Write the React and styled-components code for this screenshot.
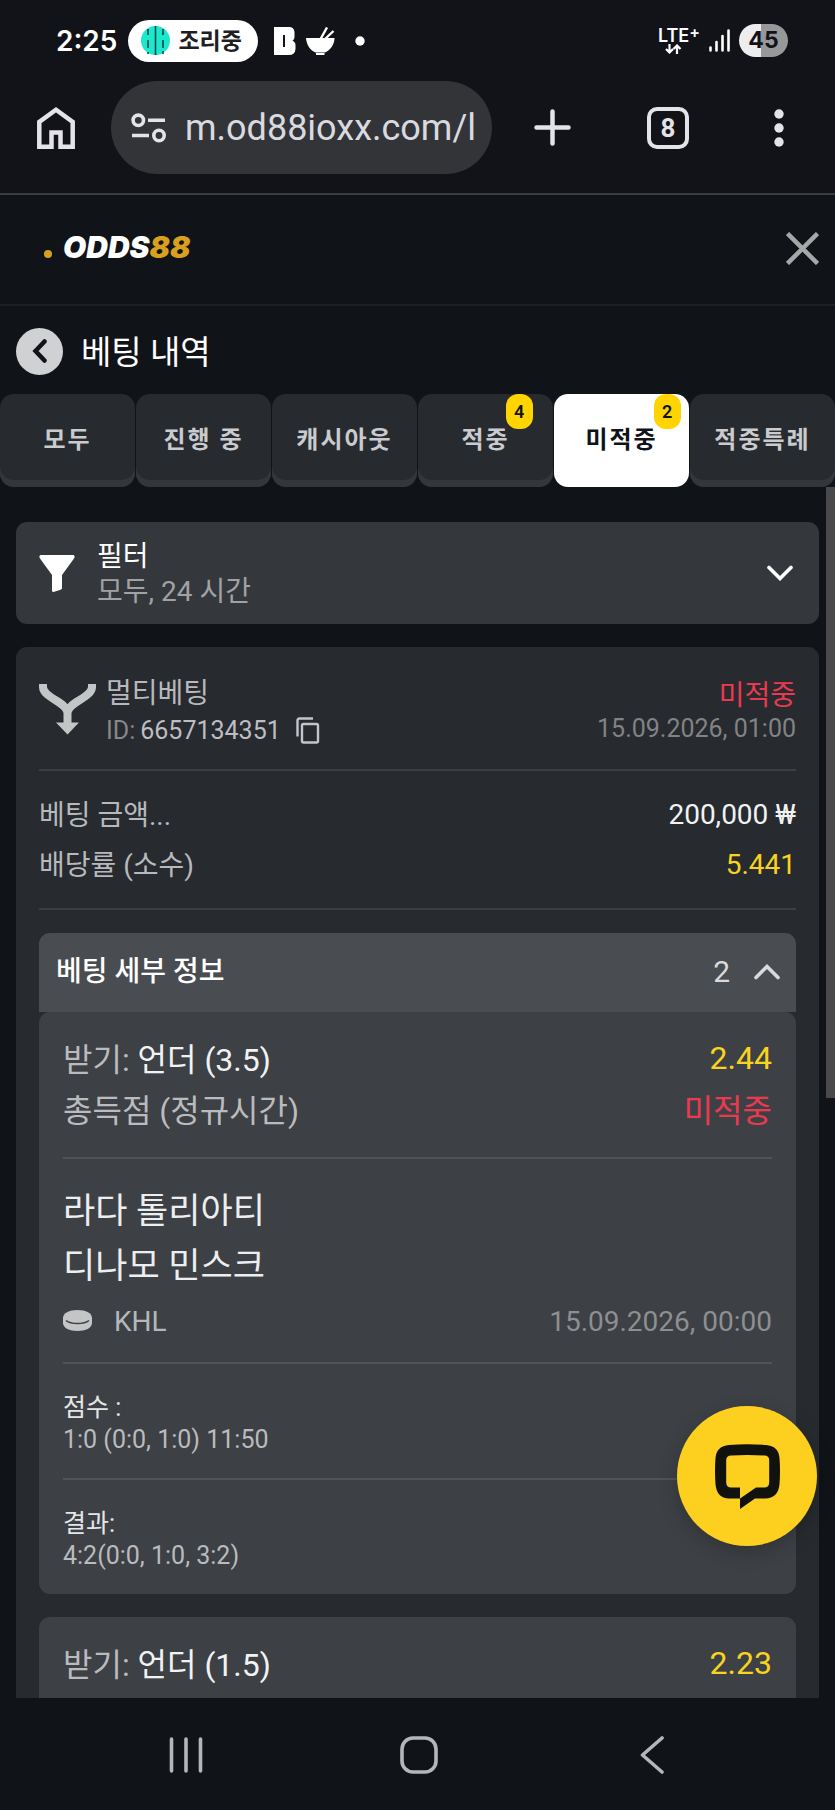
import React from "react";
import styled, { createGlobalStyle, css } from "styled-components";

const GlobalStyle = createGlobalStyle`
  *, *::before, *::after { box-sizing: border-box; }
  body {
    margin: 0;
    background: #101317;
    color: #e8eaed;
    font-family: Roboto, "Noto Sans CJK KR", sans-serif;
    font-size: 28px;
  }
  button {
    display: flex;
    align-items: center;
    justify-content: center;
    margin: 0;
    padding: 0;
    border: 0;
    background: none;
    color: inherit;
    font: inherit;
    cursor: pointer;
  }
  svg { display: block; flex: none; }
  h1, h2, p, dl, dt, dd { margin: 0; font: inherit; }
`;

const Phone = styled.div`
  position: relative;
  display: flex;
  flex-direction: column;
  height: 100vh;
  overflow: hidden;
`;

/* ---------- system status bar ---------- */

const StatusBar = styled.div`
  display: flex;
  align-items: center;
  height: 81px;
  padding: 0 47px 0 56px;
  background: #121318;
  color: #fff;
  font-family: Inter, "Noto Sans CJK KR", sans-serif;
`;

const Clock = styled.time`
  margin-right: 11px;
  font-size: 28px;
  font-weight: 600;
`;

const LivePill = styled.div`
  display: flex;
  align-items: center;
  gap: 8px;
  height: 42px;
  margin-right: 16px;
  padding: 0 16px 0 13px;
  border-radius: 21px;
  background: #fff;
  color: #1f2023;
  font-size: 23px;
  font-weight: 600;
  line-height: 24px;
`;

const StatusIcons = styled.div`
  display: flex;
  align-items: center;
  gap: 10px;
`;

const StatusEnd = styled(StatusIcons)`
  gap: 9px;
  margin-left: auto;
`;

const Network = styled.div`
  display: flex;
  flex-direction: column;
  font-size: 18px;
  font-weight: 600;
  line-height: 16px;

  sup {
    font-size: 16px;
    line-height: 0;
    vertical-align: 4px;
  }
  svg { margin-left: 7px; }
`;

const Battery = styled.div`
  width: 49px;
  height: 33px;
  border-radius: 17px;
  background: linear-gradient(90deg, #ededf0 45%, #98989a 45%);
  color: #121318;
  font-size: 23px;
  font-weight: 700;
  line-height: 33px;
  text-align: center;
`;

/* ---------- browser toolbar ---------- */

const BrowserBar = styled.div`
  display: flex;
  align-items: center;
  padding: 0 0 19px 37px;
  border-bottom: 2px solid #3c3d43;
  background: #121318;
  color: #e3e3e8;
`;

const AddressPill = styled.div`
  display: flex;
  align-items: center;
  flex: 1;
  gap: 18px;
  min-width: 0;
  height: 93px;
  margin: 0 42px 0 36px;
  padding: 0 14px 0 20px;
  border-radius: 47px;
  background: #333438;
`;

const Address = styled.input`
  flex: 1;
  min-width: 0;
  padding: 0;
  border: 0;
  outline: 0;
  background: none;
  color: #d9dae0;
  font: 36px/48px Roboto, sans-serif;
`;

const BrowserActions = styled.div`
  display: flex;
  align-items: center;
`;

const TabCount = styled.button`
  && {
    width: 42px;
    height: 42px;
    margin: 0 85px 0 76px;
    border: 4px solid #e3e3e8;
    border-radius: 10px;
    font: 700 26px/34px Roboto, sans-serif;
  }
`;

const MenuButton = styled.button`
  && {
    margin-right: 51px;
  }
`;

/* ---------- site header ---------- */

const SiteHeader = styled.header`
  display: flex;
  align-items: center;
  justify-content: space-between;
  height: 111px;
  padding: 0 16px 2px 44px;
  border-bottom: 2px solid #1c1f23;
`;

const Logo = styled.a`
  display: flex;
  align-items: baseline;
  gap: 11px;
  padding-bottom: 4px;
  color: #fff;
  font: italic 900 30px/32px Inter, sans-serif;
  text-decoration: none;

  em { color: #d8a01c; }
`;

const LogoDot = styled.span`
  width: 8px;
  height: 8px;
  border-radius: 50%;
  background: #d8a01c;
`;

const TitleRow = styled.div`
  display: flex;
  align-items: center;
  gap: 18px;
  height: 88px;
  padding: 2px 16px 0;
  color: #fff;
`;

const BackButton = styled.button`
  && {
    width: 47px;
    height: 47px;
    border-radius: 50%;
    background: #cfd1d3;
    color: #101317;
  }
`;

const Title = styled.h1`
  && {
    padding-top: 3px;
    font-size: 33px;
    line-height: 48px;
  }
`;

/* ---------- result tabs ---------- */

const Tabs = styled.div`
  display: flex;
  gap: 1px;
  height: 93px;
`;

const Tab = styled.button`
  && {
    flex: 1 0 auto;
    align-items: stretch;
    min-width: 135px;
    padding: 0 24px;
    border-radius: 14px;
    background: #272a2e;
    box-shadow: inset 0 -7px 0 #33373b;
    color: #c9cbce;
    font-size: 24px;
    font-weight: 600;
    letter-spacing: 2px;
    line-height: 32px;
    ${(p) =>
      p.$active &&
      css`
        background: #fff;
        box-shadow: none;
        color: #101317;
      `}
  }
`;

const TabLabel = styled.span`
  position: relative;
  display: flex;
  align-items: center;
  padding-bottom: 2px;
`;

const Badge = styled.span`
  position: absolute;
  top: 0;
  left: 100%;
  width: 27px;
  height: 35px;
  margin-left: -4px;
  border-radius: 12px;
  background: #ffd400;
  color: #101317;
  font-size: 18px;
  line-height: 35px;
  letter-spacing: 0;
  text-align: center;
`;

/* ---------- scrolling content ---------- */

const ContentFrame = styled.div`
  position: relative;
  flex: 1;
  min-height: 0;
`;

const Content = styled.main`
  display: flex;
  flex-direction: column;
  gap: 23px;
  height: 100%;
  padding: 35px 16px 0;
  overflow-y: auto;
  scrollbar-width: none;

  > * { flex: none; }
`;

const ScrollThumb = styled.div`
  position: absolute;
  top: 0;
  right: 0;
  width: 9px;
  height: 611px;
  background: #49494c;
`;

const FilterButton = styled.button`
  && {
    gap: 22px;
    height: 102px;
    padding: 0 26px 0 23px;
    border-radius: 11px;
    background: #34373b;
    color: #fff;
    line-height: 35px;
    text-align: left;
  }
`;

const FilterText = styled.span`
  flex: 1;
  display: flex;
  flex-direction: column;
  padding-top: 2px;
`;

const Muted = styled.span`
  color: #a0a2a5;
`;

const BetCard = styled.article`
  padding: 23px;
  border-radius: 11px;
  background: #272a2e;
`;

const BetHead = styled.header`
  display: flex;
  align-items: flex-start;
  gap: 10px;
  padding-bottom: 20px;
  border-bottom: 2px solid #3b3e42;

  > svg { margin-top: 13px; }
`;

const BetName = styled.div`
  flex: 1;
  display: flex;
  flex-direction: column;
  height: 79px;
  padding-top: 5px;
  color: #b7b9bc;
  line-height: 37px;
`;

const BetId = styled.div`
  display: flex;
  align-items: center;
  gap: 5px;
  color: #85878a;
  font-size: 25px;

  b { color: #bcbec1; font-weight: 400; }
  button { margin-left: 10px; color: #c3c5c8; }
`;

const BetStatus = styled.div`
  display: flex;
  flex-direction: column;
  align-items: flex-end;
  padding-top: 9px;
  line-height: 33px;

  time { color: #818386; font-size: 25px; }
`;

const Lost = styled.span`
  color: #ea3a50;
`;

const Odds = styled.dd`
  color: #f8d31f;
`;

const Totals = styled.dl`
  padding: 20px 0 17px;
  border-bottom: 2px solid #3b3e42;
`;

const TotalRow = styled.div`
  display: flex;
  justify-content: space-between;
  color: #b7b9bc;
  line-height: 50px;

  dd { line-height: 48px; }
`;

const Amount = styled.dd`
  color: #f1f2f3;
`;

const Details = styled.section`
  display: flex;
  flex-direction: column;
  margin-top: 23px;
`;

const DetailsToggle = styled.button`
  && {
    justify-content: flex-start;
    gap: 24px;
    height: 79px;
    padding: 0 16px 2px 17px;
    border-radius: 11px 11px 0 0;
    background: #494c50;
    color: #d8dadd;
    font-size: 30px;
    line-height: 40px;
  }

  strong {
    flex: 1;
    color: #fff;
    font-size: 28px;
    font-weight: 500;
    text-align: left;
  }
`;

const Leg = styled.section`
  padding: 23px 24px 0;
  border-radius: 11px;
  background: #3d4044;

  & + & { margin-top: 23px; }
`;

const Pick = styled.dl`
  padding-bottom: 20px;
`;

const PickRow = styled.div`
  display: flex;
  justify-content: space-between;
  color: #b9bbbe;
  font-size: 32px;
  line-height: 51px;

  b { color: #f1f2f3; font-weight: 400; }
  ${Odds} { line-height: 47px; }
`;

const Match = styled.div`
  padding: 25px 0 20px;
  border-top: 2px solid #505357;
`;

const Team = styled.h2`
  && {
    color: #eceef0;
    font-size: 35px;
    line-height: 55px;
  }
`;

const League = styled.div`
  display: flex;
  align-items: center;
  gap: 22px;
  margin-top: 8px;
  color: #b5b7ba;
  line-height: 40px;

  time { margin-left: auto; color: #8d8f93; }
`;

const Score = styled.div`
  padding: 28px 0 22px;
  border-top: 2px solid #505357;
  color: #b9bbbe;
  font-size: 25px;
  line-height: 32px;

  h3 { margin: 0; color: #e4e6e8; font: inherit; }
`;

const ChatButton = styled.button`
  && {
    position: absolute;
    right: 18px;
    bottom: 152px;
    width: 140px;
    height: 140px;
    border-radius: 50%;
    background: #fdd020;
    box-shadow: 0 6px 20px rgba(0, 0, 0, 0.2);
    color: #11110d;
  }
`;

/* ---------- system navigation ---------- */

const NavBar = styled.nav`
  display: grid;
  grid-template-columns: repeat(3, 1fr);
  height: 112px;
  padding: 2px 66px 0 69px;
  background: #101317;
  color: #b4b6b9;
`;

/* ---------- drawings ---------- */

const AppMark = () => (
  <svg width="29" height="29" viewBox="0 0 29 29">
    <circle cx="14.500" cy="14.500" r="14.500" fill="#1ce8cf" />
    <path d="M14.500 0V29M7 3V9M7 14V22M22 3V9M22 14V22M7 26V28M22 25V28" stroke="#11423f" strokeWidth="1.600" />
  </svg>
);

const LetterMark = () => (
  <svg width="22" height="28" viewBox="0 0 22 28" fill="currentColor" fillRule="evenodd">
    <path d="M0 0H15Q20 0 20.500 5V10Q20.500 13 18.500 13.700Q21.500 15 21.500 18V22Q21 28 15 28H0ZM9 8V20H11V8Z" />
  </svg>
);

const BowlIcon = () => (
  <svg width="29" height="28" viewBox="0 0 29 28">
    <path d="M0 11H28.500C28.500 18 24 23 19 25.500H9.500C4 23 .5 18 0 11Z" fill="currentColor" />
    <path d="M10 27H18.500" stroke="currentColor" strokeWidth="2" />
    <path d="M14 13L21 .5M18 13L27.500 4" stroke="currentColor" strokeWidth="2.400" />
  </svg>
);

const DataArrows = () => (
  <svg width="17" height="10" viewBox="0 0 17 10" fill="none" stroke="currentColor" strokeWidth="2.200">
    <path d="M4.500 0V8M1 5L4.500 8.500L8 5M12 10V2M8.500 5L12 1.500L15.500 5" />
  </svg>
);

const SignalIcon = () => (
  <svg width="21" height="23" viewBox="0 0 21 23" stroke="currentColor" strokeWidth="2.600" strokeLinecap="round">
    <path d="M1.500 18.500V21.500M7.500 13V21.500M13.500 7V21.500M19.500 1.500V21.500" />
  </svg>
);

const HomeIcon = () => (
  <svg width="38" height="42" viewBox="0 0 38 42" fill="none" stroke="currentColor" strokeWidth="4.500">
    <path d="M2.300 39.700V15L19 2.800L35.700 15V39.700H23.500V25.500H14.500V39.700Z" />
  </svg>
);

const TuneIcon = () => (
  <svg width="36" height="30" viewBox="0 0 36 30" fill="none" stroke="currentColor" strokeWidth="3.600">
    <circle cx="7.300" cy="7.300" r="5.200" />
    <path d="M17 7.300H34M1 22.500H18" />
    <circle cx="28" cy="22.500" r="5.200" />
  </svg>
);

const PlusIcon = () => (
  <svg width="37" height="37" viewBox="0 0 37 37" stroke="currentColor" strokeWidth="4.500" strokeLinecap="round">
    <path d="M18.500 2.500V34.500M2.500 18.500H34.500" />
  </svg>
);

const DotsIcon = () => (
  <svg width="10" height="38" viewBox="0 0 10 38" fill="currentColor">
    <circle cx="5" cy="5" r="4.700" />
    <circle cx="5" cy="19" r="4.700" />
    <circle cx="5" cy="33" r="4.700" />
  </svg>
);

const CloseIcon = () => (
  <svg width="33" height="33" viewBox="0 0 33 33" stroke="#a5a7a9" strokeWidth="4.500">
    <path d="M1.500 1.500L31.500 31.500M31.500 1.500L1.500 31.500" />
  </svg>
);

const BackIcon = () => (
  <svg width="16" height="24" viewBox="0 0 16 24" fill="none" stroke="currentColor" strokeWidth="4.500" strokeLinecap="round">
    <path d="M12.500 2.500L3.500 12L12.500 21.500" />
  </svg>
);

const FunnelIcon = () => (
  <svg width="36" height="37" viewBox="0 0 36 37" fill="currentColor">
    <path d="M1.500 0H34.500Q36.500 1 35 3.500L23 20V33.500Q22.500 34.500 21.500 34.800L14.500 37Q13 37 13 35.500V20L1 3.500Q-.5 1 1.500 0Z" />
  </svg>
);

const Chevron = ({ up }) => (
  <svg width="26" height="16" viewBox="0 0 26 16" fill="none" stroke="currentColor" strokeWidth="3.600" strokeLinecap="round">
    <path d={up ? "M2 13.500L13 2.500L24 13.500" : "M2 2.500L13 13.500L24 2.500"} />
  </svg>
);

const MergeIcon = () => (
  <svg width="57" height="52" viewBox="0 0 57 52" fill="none" stroke="#c3c5c7" strokeWidth="8">
    <path d="M4 1V4C4 15 28.500 19 28.500 30M53 1V4C53 15 28.500 19 28.500 30V42" />
    <path d="M17 39.500H40L28.500 51.500Z" fill="#c3c5c7" stroke="none" />
  </svg>
);

const CopyIcon = () => (
  <svg width="24" height="28" viewBox="0 0 24 28" fill="none" stroke="currentColor" strokeWidth="2.400">
    <path d="M1.500 19.500V3.500Q1.500 1.500 3.500 1.500H17" />
    <rect x="6" y="7" width="16" height="18.500" rx="1.500" />
  </svg>
);

const PuckIcon = () => (
  <svg width="29" height="24" viewBox="0 0 29 24">
    <path d="M0 8C0 3 6 0 14.500 0S29 3 29 8V13C29 18 22.500 21 14.500 21S0 18 0 13Z" fill="#c4c5c7" />
    <path d="M3 10.500C8 14.500 21 14.500 26 10.500" fill="none" stroke="#3d4044" strokeWidth="1.600" />
  </svg>
);

const ChatIcon = () => (
  <svg width="65" height="65" viewBox="0 0 65 65" fill="currentColor" fillRule="evenodd">
    <path d="M14 1Q32 -.7 51 1Q63.500 2 64.500 14Q65.500 27 64.500 40Q63.500 54 50 54.500H40L25 65V54.500H14Q1.500 54 .5 40Q-.5 27 .5 14Q1.500 2 14 1ZM16 11.500Q11.500 11.500 11.200 16V38.500Q11.500 43.500 16 43.500H25V54.500L41 43.500H49.500Q54 43.500 54.200 38.500V16Q54 11.500 49.500 11.500Q32 10.500 16 11.500Z" />
  </svg>
);

const RecentsIcon = () => (
  <svg width="34" height="36" viewBox="0 0 34 36" stroke="currentColor" strokeWidth="3.600" strokeLinecap="round">
    <path d="M2.500 2V34M17 2V34M31.500 2V34" />
  </svg>
);

const NavHomeIcon = () => (
  <svg width="38" height="38" viewBox="0 0 38 38" fill="none" stroke="currentColor" strokeWidth="3.600">
    <rect x="2" y="2" width="34" height="34" rx="11" />
  </svg>
);

const NavBackIcon = () => (
  <svg width="24" height="38" viewBox="0 0 24 38" fill="none" stroke="currentColor" strokeWidth="3.600" strokeLinecap="round" strokeLinejoin="round">
    <path d="M22 2L2.500 19L22 36" />
  </svg>
);

/* ---------- data ---------- */

const TABS = [
  { label: "모두" },
  { label: "진행 중" },
  { label: "캐시아웃" },
  { label: "적중", count: 4 },
  { label: "미적중", count: 2, active: true },
  { label: "적중특례" },
];

const SCORES = [
  { title: "점수 :", value: "1:0 (0:0, 1:0) 11:50" },
  { title: "결과:", value: "4:2(0:0, 1:0, 3:2)" },
];

export default function App() {
  return (
    <>
      <GlobalStyle />
      <Phone>
        <StatusBar>
          <Clock>2:25</Clock>
          <LivePill>
            <AppMark />
            조리중
          </LivePill>
          <StatusIcons>
            <LetterMark />
            <BowlIcon />
            <svg width="30" height="10" viewBox="0 0 30 10"><circle cx="15" cy="5" r="4.700" fill="#fff" /></svg>
          </StatusIcons>
          <StatusEnd>
            <Network>
              <span>LTE<sup>+</sup></span>
              <DataArrows />
            </Network>
            <SignalIcon />
            <Battery>45</Battery>
          </StatusEnd>
        </StatusBar>

        <BrowserBar>
          <button aria-label="홈"><HomeIcon /></button>
          <AddressPill>
            <TuneIcon />
            <Address aria-label="주소" defaultValue="m.od88ioxx.com/l" />
          </AddressPill>
          <BrowserActions>
            <button aria-label="새 탭"><PlusIcon /></button>
            <TabCount>8</TabCount>
            <MenuButton aria-label="메뉴"><DotsIcon /></MenuButton>
          </BrowserActions>
        </BrowserBar>

        <SiteHeader>
          <Logo href="#">
            <LogoDot />
            <span>ODDS<em>88</em></span>
          </Logo>
          <button aria-label="닫기"><CloseIcon /></button>
        </SiteHeader>

        <TitleRow>
          <BackButton aria-label="뒤로"><BackIcon /></BackButton>
          <Title>베팅 내역</Title>
        </TitleRow>

        <Tabs role="tablist">
          {TABS.map((t) => (
            <Tab key={t.label} role="tab" aria-selected={!!t.active} $active={t.active}>
              <TabLabel>
                {t.label}
                {t.count && <Badge>{t.count}</Badge>}
              </TabLabel>
            </Tab>
          ))}
        </Tabs>

        <ContentFrame>
          <Content>
            <FilterButton>
              <FunnelIcon />
              <FilterText>
                <span>필터</span>
                <Muted>모두, 24 시간</Muted>
              </FilterText>
              <Chevron />
            </FilterButton>

            <BetCard>
              <BetHead>
                <MergeIcon />
                <BetName>
                  <span>멀티베팅</span>
                  <BetId>
                    ID: <b>6657134351</b>
                    <button aria-label="복사"><CopyIcon /></button>
                  </BetId>
                </BetName>
                <BetStatus>
                  <Lost>미적중</Lost>
                  <time>15.09.2026, 01:00</time>
                </BetStatus>
              </BetHead>

              <Totals>
                <TotalRow>
                  <dt>베팅 금액...</dt>
                  <Amount>200,000 ₩</Amount>
                </TotalRow>
                <TotalRow>
                  <dt>배당률 (소수)</dt>
                  <Odds>5.441</Odds>
                </TotalRow>
              </Totals>

              <Details>
                <DetailsToggle aria-expanded="true">
                  <strong>베팅 세부 정보</strong>
                  <span>2</span>
                  <Chevron up />
                </DetailsToggle>

                <Leg>
                  <Pick>
                    <PickRow>
                      <dt>받기: <b>언더 (3.5)</b></dt>
                      <Odds>2.44</Odds>
                    </PickRow>
                    <PickRow>
                      <dt>총득점 (정규시간)</dt>
                      <dd><Lost>미적중</Lost></dd>
                    </PickRow>
                  </Pick>
                  <Match>
                    <Team>라다 톨리아티</Team>
                    <Team>디나모 민스크</Team>
                    <League>
                      <PuckIcon />
                      <span>KHL</span>
                      <time>15.09.2026, 00:00</time>
                    </League>
                  </Match>
                  {SCORES.map((s) => (
                    <Score key={s.title}>
                      <h3>{s.title}</h3>
                      <p>{s.value}</p>
                    </Score>
                  ))}
                </Leg>

                <Leg>
                  <Pick>
                    <PickRow>
                      <dt>받기: <b>언더 (1.5)</b></dt>
                      <Odds>2.23</Odds>
                    </PickRow>
                  </Pick>
                </Leg>
              </Details>
            </BetCard>
          </Content>
          <ScrollThumb />
          <ChatButton aria-label="채팅"><ChatIcon /></ChatButton>
        </ContentFrame>

        <NavBar>
          <button aria-label="최근 앱"><RecentsIcon /></button>
          <button aria-label="홈 화면"><NavHomeIcon /></button>
          <button aria-label="뒤로 가기"><NavBackIcon /></button>
        </NavBar>
      </Phone>
    </>
  );
}
